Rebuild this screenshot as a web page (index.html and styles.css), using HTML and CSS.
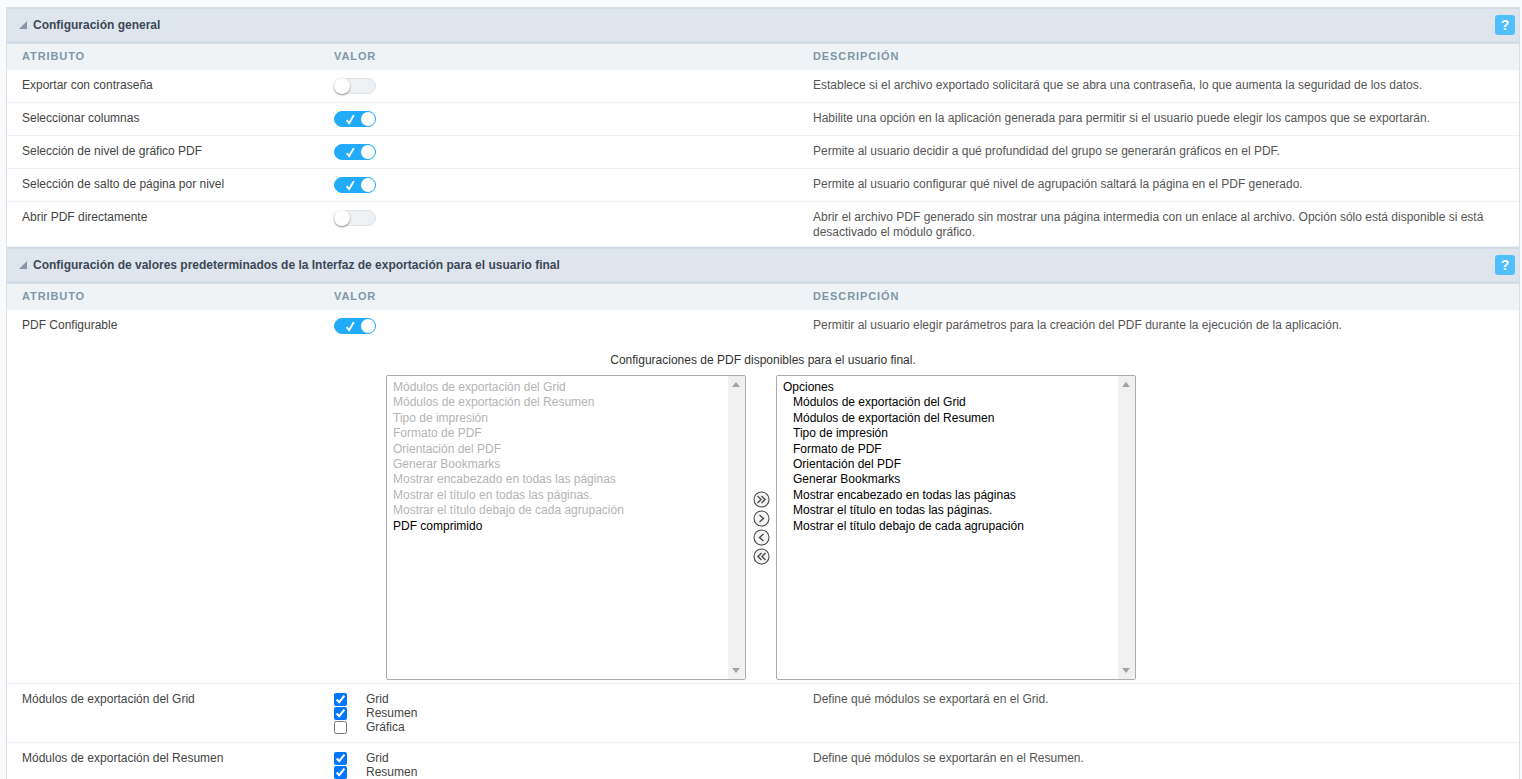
FILE: index.html
```html
<!DOCTYPE html>
<html lang="es">
<head>
<meta charset="utf-8">
<title>Configuración PDF</title>
<link rel="stylesheet" href="styles.css">
</head>
<body>
<div class="panel">
  <section class="section">
    <div class="sec-head">
      <span class="tri"></span><h2>Configuración general</h2><span class="help">?</span>
    </div>
    <div class="row th"><div class="c1">ATRIBUTO</div><div class="c2">VALOR</div><div class="c3">DESCRIPCIÓN</div></div>
    <div class="row"><div class="c1">Exportar con contraseña</div><div class="c2"><span class="sw"><span class="knob"></span></span></div><div class="c3">Establece si el archivo exportado solicitará que se abra una contraseña, lo que aumenta la seguridad de los datos.</div></div>
    <div class="row"><div class="c1">Seleccionar columnas</div><div class="c2"><span class="sw on"><svg class="chk" viewBox="0 0 10 10"><path d="M1.5 5.5 3.8 8.2 8 1"/></svg><span class="knob"></span></span></div><div class="c3">Habilite una opción en la aplicación generada para permitir si el usuario puede elegir los campos que se exportarán.</div></div>
    <div class="row"><div class="c1">Selección de nivel de gráfico PDF</div><div class="c2"><span class="sw on"><svg class="chk" viewBox="0 0 10 10"><path d="M1.5 5.5 3.8 8.2 8 1"/></svg><span class="knob"></span></span></div><div class="c3">Permite al usuario decidir a qué profundidad del grupo se generarán gráficos en el PDF.</div></div>
    <div class="row"><div class="c1">Selección de salto de página por nivel</div><div class="c2"><span class="sw on"><svg class="chk" viewBox="0 0 10 10"><path d="M1.5 5.5 3.8 8.2 8 1"/></svg><span class="knob"></span></span></div><div class="c3">Permite al usuario configurar qué nivel de agrupación saltará la página en el PDF generado.</div></div>
    <div class="row tall"><div class="c1">Abrir PDF directamente</div><div class="c2"><span class="sw"><span class="knob"></span></span></div><div class="c3">Abrir el archivo PDF generado sin mostrar una página intermedia con un enlace al archivo. Opción sólo está disponible si está desactivado el módulo gráfico.</div></div>
  </section>
  <section class="section">
    <div class="sec-head">
      <span class="tri"></span><h2>Configuración de valores predeterminados de la Interfaz de exportación para el usuario final</h2><span class="help">?</span>
    </div>
    <div class="row th"><div class="c1">ATRIBUTO</div><div class="c2">VALOR</div><div class="c3">DESCRIPCIÓN</div></div>
    <div class="row config-row"><div class="c1">PDF Configurable</div><div class="c2"><span class="sw on"><svg class="chk" viewBox="0 0 10 10"><path d="M1.5 5.5 3.8 8.2 8 1"/></svg><span class="knob"></span></span></div><div class="c3">Permitir al usuario elegir parámetros para la creación del PDF durante la ejecución de la aplicación.</div></div>
    <div class="picker">
      <p class="picker-title">Configuraciones de PDF disponibles para el usuario final.</p>
      <div class="picker-body">
        <div class="listbox">
          <ul class="items">
            <li class="off">Módulos de exportación del Grid</li>
            <li class="off">Módulos de exportación del Resumen</li>
            <li class="off">Tipo de impresión</li>
            <li class="off">Formato de PDF</li>
            <li class="off">Orientación del PDF</li>
            <li class="off">Generar Bookmarks</li>
            <li class="off">Mostrar encabezado en todas las páginas</li>
            <li class="off">Mostrar el título en todas las páginas.</li>
            <li class="off">Mostrar el título debajo de cada agrupación</li>
            <li>PDF comprimido</li>
          </ul>
          <div class="sb"><span class="up"></span><span class="down"></span></div>
        </div>
        <div class="moves">
          <svg class="mv" viewBox="0 0 17 17"><circle cx="8.5" cy="8.5" r="7.5"/><path d="M4.5 5 8 8.5 4.5 12M8.5 5 12 8.5 8.5 12"/></svg>
          <svg class="mv" viewBox="0 0 17 17"><circle cx="8.5" cy="8.5" r="7.5"/><path d="M6.5 5 10.5 8.5 6.5 12"/></svg>
          <svg class="mv" viewBox="0 0 17 17"><circle cx="8.5" cy="8.5" r="7.5"/><path d="M10.5 5 6.5 8.5 10.5 12"/></svg>
          <svg class="mv" viewBox="0 0 17 17"><circle cx="8.5" cy="8.5" r="7.5"/><path d="M8.5 5 5 8.5 8.5 12M12.5 5 9 8.5 12.5 12"/></svg>
        </div>
        <div class="listbox">
          <ul class="items">
            <li>Opciones</li>
            <li class="ind">Módulos de exportación del Grid</li>
            <li class="ind">Módulos de exportación del Resumen</li>
            <li class="ind">Tipo de impresión</li>
            <li class="ind">Formato de PDF</li>
            <li class="ind">Orientación del PDF</li>
            <li class="ind">Generar Bookmarks</li>
            <li class="ind">Mostrar encabezado en todas las páginas</li>
            <li class="ind">Mostrar el título en todas las páginas.</li>
            <li class="ind">Mostrar el título debajo de cada agrupación</li>
          </ul>
          <div class="sb"><span class="up"></span><span class="down"></span></div>
        </div>
      </div>
    </div>
    <div class="row checks"><div class="c1">Módulos de exportación del Grid</div><div class="c2">
      <label class="ck"><input type="checkbox" checked><span>Grid</span></label>
      <label class="ck"><input type="checkbox" checked><span>Resumen</span></label>
      <label class="ck"><input type="checkbox"><span>Gráfica</span></label>
    </div><div class="c3">Define qué módulos se exportará en el Grid.</div></div>
    <div class="row checks"><div class="c1">Módulos de exportación del Resumen</div><div class="c2">
      <label class="ck"><input type="checkbox" checked><span>Grid</span></label>
      <label class="ck"><input type="checkbox" checked><span>Resumen</span></label>
    </div><div class="c3">Define qué módulos se exportarán en el Resumen.</div></div>
  </section>
</div>
</body>
</html>
```
FILE: styles.css
```css
* { box-sizing: border-box; }
html, body { height: 100%; }
body {
  margin: 0;
  height: 779px;
  overflow: hidden;
  background: #f8fafc;
  font-family: "Liberation Sans", Arial, sans-serif;
  font-size: 12px;
  color: #444;
}
.panel {
  margin: 7px 2px 0 6px;
  background: #fff;
  border-left: 1px solid #d7e0e8;
  border-right: 1px solid #d7e0e8;
}
.sec-head {
  height: 37px;
  display: flex;
  align-items: center;
  padding: 0 4px 0 12px;
  background: #dfe5ec;
  border-top: 2px solid #d3dce4;
  border-bottom: 3px solid #d3dce4;
}
.tri {
  width: 0;
  height: 0;
  border-left: 8px solid transparent;
  border-bottom: 8px solid #8a96a6;
  margin-right: 6px;
}
.sec-head h2 {
  margin: 0;
  flex: 1;
  font-size: 12px;
  font-weight: bold;
  color: #3c4858;
}
.help {
  width: 20px;
  height: 20px;
  border-radius: 3px;
  background: #4fc0fb;
  color: #fff;
  font-size: 14px;
  font-weight: bold;
  line-height: 20px;
  text-align: center;
}
.row {
  display: flex;
  min-height: 33px;
  padding: 8px 0 0 15px;
  border-bottom: 1px solid #eef1f5;
  line-height: 14px;
}
.c1 { width: 312px; flex: none; }
.c2 { width: 479px; flex: none; }
.c3 { flex: 1; padding-right: 10px; color: #555; line-height: 15px; }
.row.tall { height: 45px; }
.row.th {
  min-height: 26px;
  height: 26px;
  padding-top: 6px;
  background: #eff3f6;
  border: 0;
  color: #8097a8;
  font-size: 11px;
  font-weight: bold;
  letter-spacing: .9px;
  line-height: 13px;
}
.row.th .c3 { color: #8097a8; line-height: 13px; }
.sw {
  position: relative;
  display: block;
  width: 42px;
  height: 16px;
  border-radius: 8px;
  background: #eef1f4;
  border: 1px solid #dfe4e9;
}
.sw.on { background: #22abf8; border-color: #22abf8; }
.knob {
  position: absolute;
  left: -1px;
  top: -1px;
  width: 16px;
  height: 16px;
  border-radius: 50%;
  background: #fff;
  box-shadow: 0 1px 2px rgba(0, 0, 0, .45);
}
.sw.on .knob {
  left: auto;
  right: 0;
  top: 0;
  width: 14px;
  height: 14px;
  box-shadow: none;
}
.chk {
  position: absolute;
  left: 10px;
  top: 2px;
  width: 11px;
  height: 11px;
  fill: none;
  stroke: #fff;
  stroke-width: 1.7;
}
.config-row { border: 0; min-height: 34px; }
.picker { padding-bottom: 3px; border-bottom: 1px solid #eef1f5; }
.picker-title {
  margin: 0;
  padding: 9px 0 7px;
  height: 31px;
  text-align: center;
  color: #333;
  line-height: 15px;
}
.picker-body { display: flex; margin-left: 379px; }
.listbox {
  width: 360px;
  height: 305px;
  display: flex;
  background: #fff;
  border: 1px solid #a9adb3;
  border-radius: 2px;
}
.items {
  flex: 1;
  margin: 0;
  padding: 3.85px 6px 4px;
  list-style: none;
  color: #000;
  line-height: 15.43px;
}
.items .off { color: #b4b4b4; }
.items .ind { padding-left: 10px; }
.sb { position: relative; width: 17px; background: #f0f0f0; }
.up, .down {
  position: absolute;
  left: 4px;
  width: 0;
  height: 0;
  border-left: 4.5px solid transparent;
  border-right: 4.5px solid transparent;
}
.up { top: 6px; border-bottom: 5px solid #a3a3a3; }
.down { bottom: 6px; border-top: 5px solid #a3a3a3; }
.moves {
  width: 30px;
  padding-top: 116px;
  display: flex;
  flex-direction: column;
  align-items: center;
  gap: 2px;
}
.mv {
  width: 17px;
  height: 17px;
  fill: #f4f4f4;
  stroke: #4a4a4a;
  stroke-width: 1.1;
}
.mv path { fill: none; stroke-width: 1.4; }
.checks { min-height: 59px; }
.ck { display: flex; height: 14px; align-items: center; color: #444; }
.ck input { width: 13px; height: 13px; margin: 0 19px 0 0; }
```
